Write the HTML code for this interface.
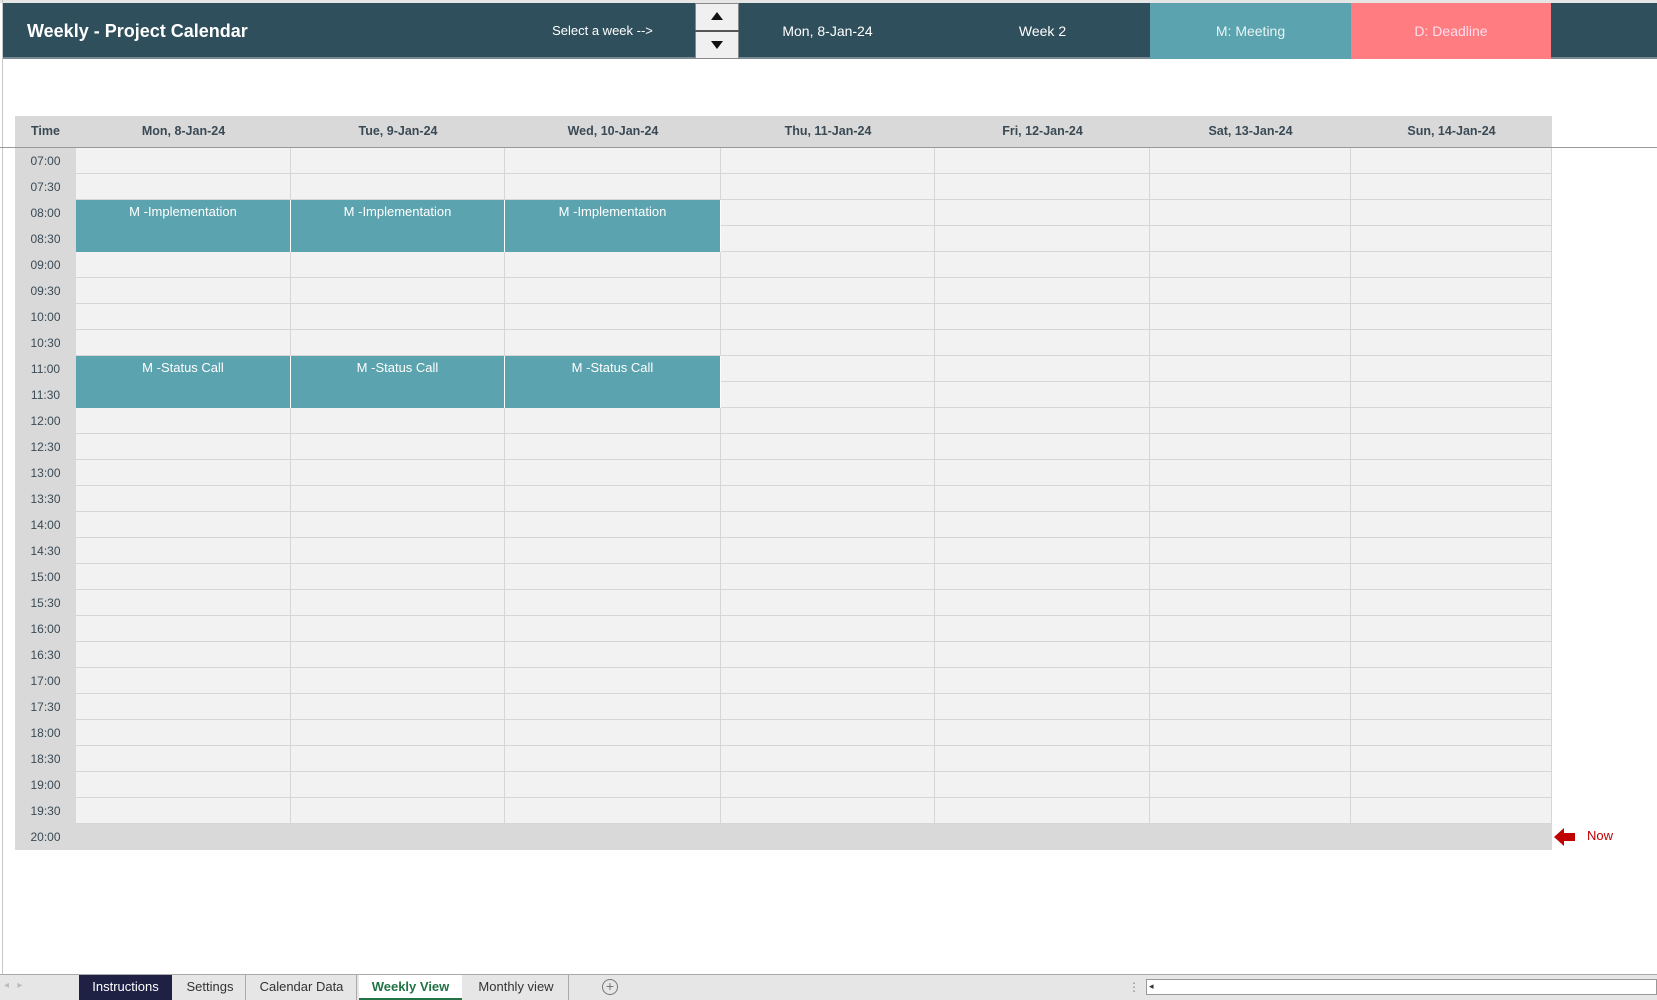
<!DOCTYPE html>
<html><head><meta charset="utf-8"><style>
*{margin:0;padding:0;box-sizing:border-box}
body{width:1657px;height:1000px;overflow:hidden;background:#fff;font-family:"Liberation Sans",sans-serif;position:relative}
.a{position:absolute}
.hdr{left:3px;top:3px;width:1654px;height:56px;background:#2f4f5c;border-bottom:2px solid #7a8a90}
.ht{color:#fff;font-size:13px;text-align:center;line-height:56px;top:3px;height:56px}
.colh{top:116px;height:31px;background:#d9d9d9;color:#3a4a55;font-weight:bold;font-size:12.5px;line-height:31px;text-align:center}
.tl{left:15px;width:61px;background:#d9d9d9;color:#3a4a55;font-size:12px;text-align:center;height:26px;line-height:26px}
.cell{background:#f2f2f2;border-right:1px solid #d6d6d6;border-bottom:1px solid #d6d6d6;height:26px}
.ev{background:#5ba3ae;color:#fff;font-size:13px;text-align:center;line-height:24px;height:52px;border-right:1px solid #fff}
.tab{top:975px;height:25px;line-height:24px;font-size:13px;color:#333;text-align:center}
</style></head><body>
<div class="a" style="left:0;top:0;width:1657px;height:3px;background:#e6e6e6"></div>
<div class="a" style="left:2px;top:0;width:1px;height:975px;background:#c8c8c8"></div>
<div class="a hdr"></div>
<div class="a" style="left:27px;top:3px;height:56px;line-height:56px;color:#fff;font-weight:bold;font-size:18px">Weekly - Project Calendar</div>
<div class="a ht" style="left:520px;width:165px">Select a week --&gt;</div>
<div class="a" style="left:695px;top:3px;width:44px;height:56px;background:#f0f0f0;border:1px solid #888"></div>
<div class="a" style="left:695px;top:30px;width:44px;height:2px;background:#555"></div>
<div class="a" style="left:711px;top:12px;width:0;height:0;border-left:6px solid transparent;border-right:6px solid transparent;border-bottom:8px solid #111"></div>
<div class="a" style="left:711px;top:41px;width:0;height:0;border-left:6px solid transparent;border-right:6px solid transparent;border-top:8px solid #111"></div>
<div class="a ht" style="left:740px;width:175px;font-size:14px">Mon, 8-Jan-24</div>
<div class="a ht" style="left:960px;width:165px;font-size:14px">Week 2</div>
<div class="a ht" style="left:1150px;width:201px;background:#5ba3ae;font-size:14px;color:#e8f4f6">M: Meeting</div>
<div class="a ht" style="left:1351px;width:200px;background:#ff7c80;font-size:14px;color:#fde">D: Deadline</div>
<div class="a" style="left:0;top:147px;width:1657px;height:1px;background:#999"></div>
<div class="a colh" style="left:15px;width:61px">Time</div>
<div class="a colh" style="left:76px;width:215px">Mon, 8-Jan-24</div>
<div class="a colh" style="left:291px;width:214px">Tue, 9-Jan-24</div>
<div class="a colh" style="left:505px;width:216px">Wed, 10-Jan-24</div>
<div class="a colh" style="left:721px;width:214px">Thu, 11-Jan-24</div>
<div class="a colh" style="left:935px;width:215px">Fri, 12-Jan-24</div>
<div class="a colh" style="left:1150px;width:201px">Sat, 13-Jan-24</div>
<div class="a colh" style="left:1351px;width:201px">Sun, 14-Jan-24</div>
<div id="g"></div>
<script>
var cols=[76,291,505,721,935,1150,1351,1552];
var times=[];for(var h=7;h<20;h++){times.push((h<10?'0':'')+h+':00');times.push((h<10?'0':'')+h+':30');}
var s='';
for(var i=0;i<26;i++){var y=148+i*26;
s+='<div class="a tl" style="top:'+y+'px">'+times[i]+'</div>';
for(var c=0;c<7;c++)s+='<div class="a cell" style="left:'+cols[c]+'px;top:'+y+'px;width:'+(cols[c+1]-cols[c])+'px"></div>';}
for(var c=0;c<3;c++){
s+='<div class="a ev" style="left:'+cols[c]+'px;top:200px;width:'+(cols[c+1]-cols[c])+'px">M -Implementation</div>';
s+='<div class="a ev" style="left:'+cols[c]+'px;top:356px;width:'+(cols[c+1]-cols[c])+'px">M -Status Call</div>';}
document.getElementById('g').innerHTML=s;
</script>
<div class="a" style="left:15px;top:824px;width:1537px;height:26px;background:#d9d9d9"></div>
<div class="a tl" style="top:824px">20:00</div>
<svg class="a" style="left:1554px;top:827px" width="22" height="20"><path d="M0 10 L10 1 L10 6 L21 6 L21 14 L10 14 L10 19 Z" fill="#c00000"/></svg>
<div class="a" style="left:1587px;top:828px;color:#c00000;font-size:13px">Now</div>
<div class="a" style="left:0;top:974px;width:1657px;height:26px;background:#e6e6e6;border-top:1px solid #aaa"></div>
<div class="a" style="left:4px;top:980px;font-size:10px;color:#bbb">◂ &nbsp; ▸</div>
<div class="a tab" style="left:79px;width:93px;background:#1e2044;color:#fff">Instructions</div>
<div class="a tab" style="left:175px;width:71px;border-right:1px solid #aaa">Settings</div>
<div class="a tab" style="left:247px;width:110px;border-right:1px solid #aaa">Calendar Data</div>
<div class="a tab" style="left:359px;width:103px;background:#fff;color:#217346;font-weight:bold;border-bottom:2px solid #217346">Weekly View</div>
<div class="a tab" style="left:464px;width:105px;border-right:1px solid #aaa">Monthly view</div>
<div class="a" style="left:602px;top:979px;width:16px;height:16px;border:1px solid #777;border-radius:50%;font-size:14px;line-height:13px;text-align:center;color:#777">+</div>
<div class="a" style="left:1128px;top:980px;font-size:12px;color:#888">⋮</div>
<div class="a" style="left:1146px;top:979px;width:511px;height:16px;background:#fff;border:1px solid #999"></div>
<div class="a" style="left:1149px;top:981px;font-size:9px;color:#333">◂</div>
</body></html>
